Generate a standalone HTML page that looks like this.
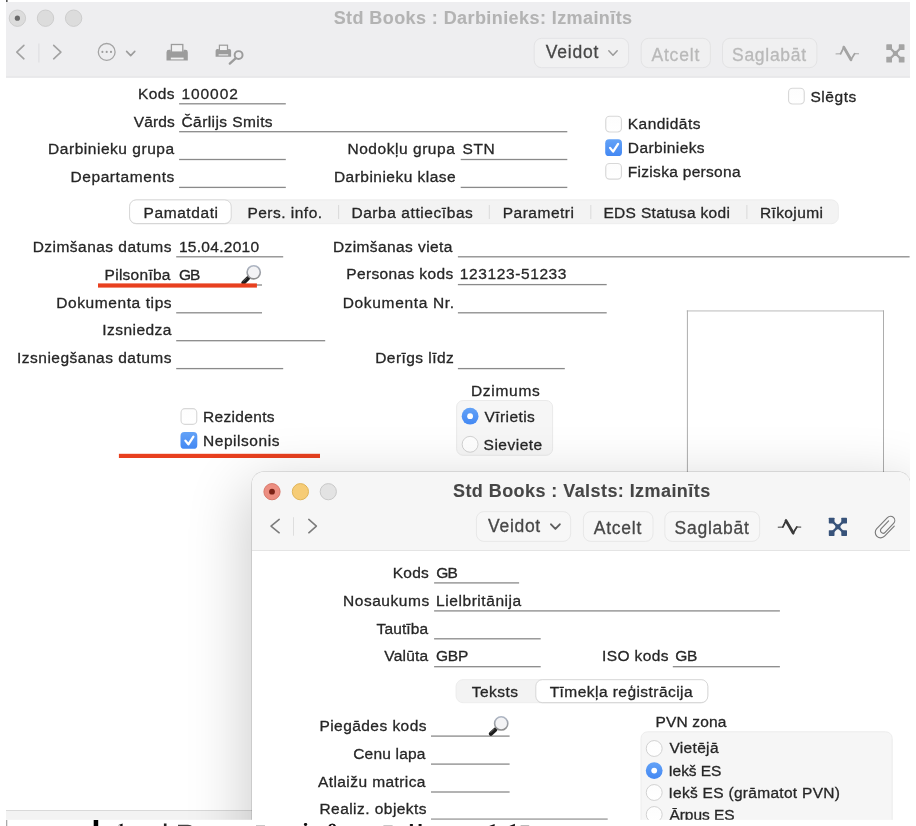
<!DOCTYPE html>
<html><head><meta charset="utf-8"><title>Std Books</title>
<style>
html,body{margin:0;padding:0}
body{width:916px;height:826px;position:relative;overflow:hidden;background:#fff;font-family:'Liberation Sans',sans-serif;}
.t{position:absolute;white-space:nowrap;line-height:20px;font-family:'Liberation Sans',sans-serif;will-change:transform;-webkit-text-stroke:0.3px currentColor;}
.abs{position:absolute}
svg{position:absolute;left:0;top:0}
</style></head><body>
<div class="abs" style="left:6px;top:2px;width:904px;height:818px;background:#fff"></div>
<svg width="916" height="826" viewBox="0 0 916 826"><rect x="6" y="2" width="904" height="73.9" fill="#eeeef0"/><rect x="6" y="75.8" width="904" height="2.1" fill="#e8e8ea"/></svg>
<div class="abs" style="left:6px;top:810px;width:904px;height:10px;background:#f3f3f3;border-top:1px solid #d9d9d9"></div>
<svg width="916" height="826" viewBox="0 0 916 826">
<defs>
<linearGradient id="blueg" x1="0" y1="0" x2="0" y2="1"><stop offset="0" stop-color="#63a2f7"/><stop offset="1" stop-color="#4388f3"/></linearGradient>
<linearGradient id="whiteg" x1="0" y1="0" x2="0" y2="1"><stop offset="0" stop-color="#fdfdfd"/><stop offset="1" stop-color="#ffffff"/></linearGradient>
<linearGradient id="lensg" x1="0" y1="0" x2="0" y2="1"><stop offset="0" stop-color="#aeb6c4"/><stop offset="1" stop-color="#8d8d8d"/></linearGradient>
</defs>
<circle cx="17.4" cy="18.2" r="8.2" fill="#dcdcdc" stroke="#cacaca" stroke-width="0.9"/>
<circle cx="45.5" cy="18.2" r="8.2" fill="#dcdcdc" stroke="#cacaca" stroke-width="0.9"/>
<circle cx="73.6" cy="18.2" r="8.2" fill="#dcdcdc" stroke="#cacaca" stroke-width="0.9"/>
<circle cx="17.4" cy="18.2" r="2.6" fill="#6a6a6a"/>
<polyline points="23.9,45.4 16.8,52.099999999999994 23.9,58.8" fill="none" stroke="#a2a2a2" stroke-width="1.6" stroke-linecap="round" stroke-linejoin="round"/>
<rect x="38.4" y="43.5" width="1" height="19" fill="#dddddf"/>
<polyline points="53.7,45.4 60.9,52.099999999999994 53.7,58.8" fill="none" stroke="#a2a2a2" stroke-width="1.6" stroke-linecap="round" stroke-linejoin="round"/>
<circle cx="106.7" cy="51.9" r="8.4" fill="none" stroke="#a4a4a4" stroke-width="1.3"/>
<circle cx="102.4" cy="51.9" r="1.05" fill="#9c9c9c"/>
<circle cx="106.7" cy="51.9" r="1.05" fill="#9c9c9c"/>
<circle cx="111.0" cy="51.9" r="1.05" fill="#9c9c9c"/>
<polyline points="126.6,51.4 130.7,55.6 134.8,51.4" fill="none" stroke="#9c9c9c" stroke-width="1.6" stroke-linecap="round" stroke-linejoin="round"/>
<rect x="171.4" y="44.5" width="11.4" height="8" fill="#f1f1f2" stroke="#9c9c9c" stroke-width="1.3"/>
<path d="M166.5 60.6 V52.2 Q166.5 49.8 169 49.8 H170.7 V51.6 H183.5 V49.8 H185.3 Q187.8 49.8 187.8 52.2 V60.6 Z" fill="#9c9c9c"/>
<rect x="170.8" y="57.6" width="12.8" height="1.8" fill="#f0f0f1"/>
<rect x="219.4" y="45.2" width="8.1" height="5.6" fill="#f1f1f2" stroke="#9c9c9c" stroke-width="1.2"/>
<path d="M215.6 56.7 V50.8 Q215.6 49 217.4 49 H218.8 V50.2 H228.1 V49 H229.3 Q231.1 49 231.1 50.8 V56.7 Z" fill="#9c9c9c"/>
<rect x="218.6" y="54.2" width="9.6" height="1.3" fill="#e4e4e5"/>
<circle cx="238.6" cy="55.1" r="3.95" fill="#eeeef0" stroke="#9c9c9c" stroke-width="1.95"/>
<line x1="235.6" y1="58.3" x2="229.8" y2="63.6" stroke="#9c9c9c" stroke-width="2.3" stroke-linecap="round"/>
<rect x="534.2" y="38.3" width="94.40" height="29.40" rx="7.5" fill="#f1f1f2" stroke="#e3e3e5" stroke-width="1"/>
<rect x="641.2" y="38.3" width="69.20" height="29.40" rx="7.5" fill="#f0f0f1" stroke="#e3e3e4" stroke-width="1"/>
<rect x="722.5" y="38.3" width="94.40" height="29.40" rx="7.5" fill="#f0f0f1" stroke="#e3e3e4" stroke-width="1"/>
<polyline points="608.8,50.8 613.0,55.2 617.2,50.8" fill="none" stroke="#9a9a9a" stroke-width="1.5" stroke-linecap="round" stroke-linejoin="round"/>
<polyline points="836.00,53.90 840.60,53.80 843.80,47.30 851.00,59.70 854.60,53.70 858.60,53.80" fill="none" stroke="#a4a4a4" stroke-width="1.0" stroke-linecap="round" stroke-linejoin="miter"/><polyline points="840.60,53.80 843.80,47.30 851.00,59.70 854.60,53.70" fill="none" stroke="#a4a4a4" stroke-width="1.7" stroke-linecap="round" stroke-linejoin="miter"/><polyline points="843.80,47.30 851.00,59.70" fill="none" stroke="#a4a4a4" stroke-width="2.8" stroke-linecap="round" stroke-linejoin="miter"/>
<rect x="886.30" y="44.30" width="5.7" height="5.7" rx="0.6" fill="#a4a4a4"/><rect x="898.80" y="44.30" width="5.7" height="5.7" rx="0.6" fill="#a4a4a4"/><rect x="886.30" y="56.80" width="5.7" height="5.7" rx="0.6" fill="#a4a4a4"/><rect x="898.80" y="56.80" width="5.7" height="5.7" rx="0.6" fill="#a4a4a4"/><rect x="892.90" y="50.90" width="5.0" height="5.0" fill="#a4a4a4"/><line x1="889.3" y1="47.3" x2="901.5" y2="59.5" stroke="#a4a4a4" stroke-width="2.3"/><line x1="901.5" y1="47.3" x2="889.3" y2="59.5" stroke="#a4a4a4" stroke-width="2.3"/>
<rect x="179.1" y="103.15" width="106.70" height="1.3" fill="#8a8a8a"/>
<rect x="179.1" y="131.05" width="388.20" height="1.3" fill="#8a8a8a"/>
<rect x="179.1" y="158.85" width="106.70" height="1.3" fill="#8a8a8a"/>
<rect x="179.1" y="186.75" width="106.70" height="1.3" fill="#8a8a8a"/>
<rect x="460.7" y="158.85" width="106.60" height="1.3" fill="#8a8a8a"/>
<rect x="460.7" y="186.75" width="106.60" height="1.3" fill="#8a8a8a"/>
<rect x="176.2" y="256.15" width="107.00" height="1.3" fill="#8a8a8a"/>
<rect x="176.2" y="284.35" width="85.80" height="1.3" fill="#8a8a8a"/>
<rect x="176.2" y="312.15" width="85.80" height="1.3" fill="#8a8a8a"/>
<rect x="176.2" y="340.05" width="149.00" height="1.3" fill="#8a8a8a"/>
<rect x="176.2" y="367.95" width="107.00" height="1.3" fill="#8a8a8a"/>
<rect x="457.9" y="256.15" width="451.70" height="1.3" fill="#8a8a8a"/>
<rect x="457.9" y="283.95" width="148.80" height="1.3" fill="#8a8a8a"/>
<rect x="457.9" y="312.15" width="148.80" height="1.3" fill="#8a8a8a"/>
<rect x="457.9" y="367.95" width="106.90" height="1.3" fill="#8a8a8a"/>
<rect x="788.55" y="88.25" width="15.700000000000001" height="15.700000000000001" rx="3.9" fill="url(#whiteg)" stroke="#d8d8d8" stroke-width="1.15"/>
<rect x="605.75" y="116.25" width="15.700000000000001" height="15.700000000000001" rx="3.9" fill="url(#whiteg)" stroke="#d8d8d8" stroke-width="1.15"/>
<rect x="605.2" y="139.3" width="16.8" height="16.8" rx="3.9" fill="url(#blueg)"/><polyline points="610.10,147.90 613.10,151.60 618.10,143.90" fill="none" stroke="#fff" stroke-width="2.3" stroke-linecap="round" stroke-linejoin="round"/>
<rect x="605.75" y="163.45000000000002" width="15.700000000000001" height="15.700000000000001" rx="3.9" fill="url(#whiteg)" stroke="#d8d8d8" stroke-width="1.15"/>
<rect x="181.05" y="408.65000000000003" width="15.700000000000001" height="15.700000000000001" rx="3.9" fill="url(#whiteg)" stroke="#d8d8d8" stroke-width="1.15"/>
<rect x="180.5" y="432.0" width="16.8" height="16.8" rx="3.9" fill="url(#blueg)"/><polyline points="185.40,440.60 188.40,444.30 193.40,436.60" fill="none" stroke="#fff" stroke-width="2.3" stroke-linecap="round" stroke-linejoin="round"/>
<rect x="129.5" y="199.8" width="708.9" height="23.9" rx="7" fill="#f3f3f3" stroke="#eaeaea" stroke-width="0.8"/>
<rect x="338.1" y="205" width="1" height="14" fill="#dadada"/>
<rect x="488.8" y="205" width="1" height="14" fill="#dadada"/>
<rect x="590.3" y="205" width="1" height="14" fill="#dadada"/>
<rect x="746.4" y="205" width="1" height="14" fill="#dadada"/>
<rect x="129.6" y="200.4" width="101.6" height="24" rx="6.5" fill="#000" opacity="0.06"/>
<rect x="129.6" y="199.9" width="101.6" height="23.6" rx="6.5" fill="#fff" stroke="#cfcfcf" stroke-width="0.8"/>
<line x1="248.00" y1="278.30" x2="243.40" y2="282.70" stroke="#1c1c1c" stroke-width="4.2" stroke-linecap="round"/><line x1="246.80" y1="277.90" x2="243.30" y2="281.40" stroke="#6a6a6a" stroke-width="0.9" stroke-linecap="round"/><circle cx="253.7" cy="272.3" r="6.6" fill="#f3f3f5" stroke="url(#lensg)" stroke-width="1.6"/>
<rect x="456.6" y="400.5" width="96" height="54.8" rx="6.5" fill="#f6f6f6" stroke="#e8e8e8" stroke-width="0.9"/>
<circle cx="470.1" cy="416.2" r="8.4" fill="url(#blueg)"/><circle cx="470.1" cy="416.2" r="2.9" fill="#fff"/>
<circle cx="470.1" cy="444.3" r="7.95" fill="url(#whiteg)" stroke="#cdcdcd" stroke-width="0.9"/>
<rect x="686.8" y="310.1" width="197.2" height="1.6" fill="#d4d4d4"/><rect x="686.9" y="310.4" width="1" height="200" fill="#adadad"/><rect x="883.0" y="310.4" width="1" height="200" fill="#adadad"/>
<rect x="98" y="283.4" width="158.9" height="4.2" fill="#e8401f"/>
<rect x="118.9" y="453.8" width="201.1" height="4.2" fill="#e8401f"/>
</svg>
<div class="t" id="a0" style="left:333px;top:8px;font-size:18px;letter-spacing:0.416px;color:#b3b3b3;font-weight:bold;-webkit-text-stroke:0.1px currentColor;transform:translateX(0.7px)">Std Books : Darbinieks: Izmainīts</div>
<div class="t" id="a1" style="left:545px;top:42px;font-size:17.5px;letter-spacing:0.76px;color:#474747;transform:translateX(0.8px)">Veidot</div>
<div class="t" id="a2" style="left:651px;top:45px;font-size:17.5px;letter-spacing:0.82px;color:#b9b9b9;transform:translateX(0.4px)">Atcelt</div>
<div class="t" id="a3" style="left:732px;top:45px;font-size:17.5px;letter-spacing:0.714px;color:#b9b9b9;transform:translateX(0.0px)">Saglabāt</div>
<div class="t" id="a4" style="left:137px;top:84px;font-size:15.5px;letter-spacing:0.433px;color:#262626;transform:translateX(0.9px)">Kods</div>
<div class="t" id="a5" style="left:181px;top:84px;font-size:15.5px;letter-spacing:0.92px;color:#262626;transform:translateX(0.5px)">100002</div>
<div class="t" id="a6" style="left:133px;top:112px;font-size:15.5px;letter-spacing:0.125px;color:#262626;transform:translateX(0.7px)">Vārds</div>
<div class="t" id="a7" style="left:181px;top:112px;font-size:15.5px;letter-spacing:0.417px;color:#262626;transform:translateX(0.5px)">Čārlijs Smits</div>
<div class="t" id="a8" style="left:48px;top:139px;font-size:15.5px;letter-spacing:0.527px;color:#262626;transform:translateX(0.1px)">Darbinieku grupa</div>
<div class="t" id="a9" style="left:70px;top:167px;font-size:15.5px;letter-spacing:0.6px;color:#262626;transform:translateX(0.4px)">Departaments</div>
<div class="t" id="a10" style="left:347px;top:139px;font-size:15.5px;letter-spacing:0.55px;color:#262626;transform:translateX(0.4px)">Nodokļu grupa</div>
<div class="t" id="a11" style="left:462px;top:139px;font-size:15.5px;letter-spacing:0.55px;color:#262626;transform:translateX(0.5px)">STN</div>
<div class="t" id="a12" style="left:333px;top:167px;font-size:15.5px;letter-spacing:0.473px;color:#262626;transform:translateX(0.9px)">Darbinieku klase</div>
<div class="t" id="a13" style="left:810px;top:87px;font-size:15.5px;letter-spacing:0.56px;color:#262626;transform:translateX(0.4px)">Slēgts</div>
<div class="t" id="a14" style="left:627px;top:114px;font-size:15.5px;letter-spacing:0.463px;color:#262626;transform:translateX(0.8px)">Kandidāts</div>
<div class="t" id="a15" style="left:627px;top:138px;font-size:15.5px;letter-spacing:0.389px;color:#262626;transform:translateX(0.8px)">Darbinieks</div>
<div class="t" id="a16" style="left:627px;top:162px;font-size:15.5px;letter-spacing:0.3px;color:#262626;transform:translateX(0.8px)">Fiziska persona</div>
<div class="t" id="a17" style="left:143px;top:203px;font-size:15.5px;letter-spacing:0.587px;color:#262626;transform:translateX(0.5px)">Pamatdati</div>
<div class="t" id="a18" style="left:247px;top:203px;font-size:15.5px;letter-spacing:0.49px;color:#262626;transform:translateX(0.4px)">Pers. info.</div>
<div class="t" id="a19" style="left:351px;top:203px;font-size:15.5px;letter-spacing:0.573px;color:#262626;transform:translateX(0.4px)">Darba attiecības</div>
<div class="t" id="a20" style="left:502px;top:203px;font-size:15.5px;letter-spacing:0.512px;color:#262626;transform:translateX(0.7px)">Parametri</div>
<div class="t" id="a21" style="left:603px;top:203px;font-size:15.5px;letter-spacing:0.34px;color:#262626;transform:translateX(0.4px)">EDS Statusa kodi</div>
<div class="t" id="a22" style="left:760px;top:203px;font-size:15.5px;letter-spacing:0.371px;color:#262626;transform:translateX(0.0px)">Rīkojumi</div>
<div class="t" id="a23" style="left:32px;top:237px;font-size:15.5px;letter-spacing:0.467px;color:#262626;transform:translateX(0.7px)">Dzimšanas datums</div>
<div class="t" id="a24" style="left:178px;top:237px;font-size:15.5px;letter-spacing:0.289px;color:#262626;transform:translateX(0.9px)">15.04.2010</div>
<div class="t" id="a25" style="left:104px;top:265px;font-size:15.5px;letter-spacing:0.262px;color:#262626;transform:translateX(0.6px)">Pilsonība</div>
<div class="t" id="a26" style="left:178px;top:265px;font-size:15.5px;letter-spacing:-0.9px;color:#262626;transform:translateX(0.9px)">GB</div>
<div class="t" id="a27" style="left:56px;top:293px;font-size:15.5px;letter-spacing:0.585px;color:#262626;transform:translateX(0.3px)">Dokumenta tips</div>
<div class="t" id="a28" style="left:102px;top:320px;font-size:15.5px;letter-spacing:0.463px;color:#262626;transform:translateX(0.2px)">Izsniedza</div>
<div class="t" id="a29" style="left:17px;top:348px;font-size:15.5px;letter-spacing:0.494px;color:#262626;transform:translateX(0.0px)">Izsniegšanas datums</div>
<div class="t" id="a30" style="left:332px;top:237px;font-size:15.5px;letter-spacing:0.414px;color:#262626;transform:translateX(0.9px)">Dzimšanas vieta</div>
<div class="t" id="a31" style="left:346px;top:264px;font-size:15.5px;letter-spacing:0.375px;color:#262626;transform:translateX(0.2px)">Personas kods</div>
<div class="t" id="a32" style="left:459px;top:264px;font-size:15.5px;letter-spacing:0.618px;color:#262626;transform:translateX(0.7px)">123123-51233</div>
<div class="t" id="a33" style="left:342px;top:293px;font-size:15.5px;letter-spacing:0.667px;color:#262626;transform:translateX(0.7px)">Dokumenta Nr.</div>
<div class="t" id="a34" style="left:375px;top:348px;font-size:15.5px;letter-spacing:0.45px;color:#262626;transform:translateX(0.2px)">Derīgs līdz</div>
<div class="t" id="a35" style="left:470px;top:381px;font-size:15.5px;letter-spacing:0.717px;color:#262626;transform:translateX(0.9px)">Dzimums</div>
<div class="t" id="a36" style="left:484px;top:407px;font-size:15.5px;letter-spacing:0.4px;color:#262626;transform:translateX(0.6px)">Vīrietis</div>
<div class="t" id="a37" style="left:483px;top:435px;font-size:15.5px;letter-spacing:0.486px;color:#262626;transform:translateX(0.6px)">Sieviete</div>
<div class="t" id="a38" style="left:203px;top:407px;font-size:15.5px;letter-spacing:0.337px;color:#262626;transform:translateX(0.0px)">Rezidents</div>
<div class="t" id="a39" style="left:203px;top:431px;font-size:15.5px;letter-spacing:0.544px;color:#262626;transform:translateX(0.0px)">Nepilsonis</div>
<div class="abs" style="left:252px;top:471.5px;width:658px;height:400px;border-radius:12px;background:#fff;box-shadow:0 0 0 0.7px rgba(0,0,0,0.13),0 19px 60px 6px rgba(0,0,0,0.20),0 0 3px rgba(0,0,0,0.05);overflow:hidden">
<div class="abs" style="left:0;top:0;width:100%;height:78.5px;background:#f6f6f6;border-bottom:1px solid #e4e4e4"></div>
</div>
<svg width="916" height="826" viewBox="0 0 916 826">
<circle cx="272" cy="491.7" r="8.1" fill="#ec8e81" stroke="#d9796b" stroke-width="1"/><circle cx="272" cy="491.7" r="2.9" fill="#7b2216"/>
<circle cx="300.4" cy="491.7" r="8.1" fill="#f6cc76" stroke="#e0b55a" stroke-width="1"/>
<circle cx="328.3" cy="491.7" r="8.1" fill="#e3e3e3" stroke="#c9c9c9" stroke-width="1"/>
<polyline points="279.2,519.4 271.0,526.0999999999999 279.2,532.8" fill="none" stroke="#7b7b7b" stroke-width="1.55" stroke-linecap="round" stroke-linejoin="round"/>
<rect x="293" y="517.2" width="1" height="18.5" fill="#dedede"/>
<polyline points="308.8,519.4 316.4,526.0999999999999 308.8,532.8" fill="none" stroke="#7b7b7b" stroke-width="1.55" stroke-linecap="round" stroke-linejoin="round"/>
<rect x="476.4" y="511.6" width="94.20" height="29.80" rx="7.5" fill="#f7f7f7" stroke="#e8e8e8" stroke-width="1"/>
<rect x="583.4" y="511.6" width="69.60" height="29.80" rx="7.5" fill="#f7f7f7" stroke="#e8e8e8" stroke-width="1"/>
<rect x="664.8" y="511.6" width="94.80" height="29.80" rx="7.5" fill="#f7f7f7" stroke="#e8e8e8" stroke-width="1"/>
<polyline points="551.0,524.3 555.4,528.9 559.8,524.3" fill="none" stroke="#5e5e5e" stroke-width="1.9" stroke-linecap="round" stroke-linejoin="round"/>
<polyline points="778.20,527.20 782.80,527.10 786.00,520.60 793.20,533.00 796.80,527.00 800.80,527.10" fill="none" stroke="#3a3a3a" stroke-width="1.0" stroke-linecap="round" stroke-linejoin="miter"/><polyline points="782.80,527.10 786.00,520.60 793.20,533.00 796.80,527.00" fill="none" stroke="#3a3a3a" stroke-width="1.7" stroke-linecap="round" stroke-linejoin="miter"/><polyline points="786.00,520.60 793.20,533.00" fill="none" stroke="#3a3a3a" stroke-width="2.8" stroke-linecap="round" stroke-linejoin="miter"/>
<rect x="828.80" y="517.70" width="5.7" height="5.7" rx="0.6" fill="#38537a"/><rect x="841.30" y="517.70" width="5.7" height="5.7" rx="0.6" fill="#38537a"/><rect x="828.80" y="530.20" width="5.7" height="5.7" rx="0.6" fill="#38537a"/><rect x="841.30" y="530.20" width="5.7" height="5.7" rx="0.6" fill="#38537a"/><rect x="835.40" y="524.30" width="5.0" height="5.0" fill="#38537a"/><line x1="831.8" y1="520.7" x2="844.0" y2="532.9000000000001" stroke="#38537a" stroke-width="2.3"/><line x1="844.0" y1="520.7" x2="831.8" y2="532.9000000000001" stroke="#38537a" stroke-width="2.3"/>
<g transform="translate(880.64,532.41) rotate(43.8)"><path d="M5.45 -14.0 L5.45 0 A5.4 5.4 0 0 1 -5.36 0 L-5.36 -15.4 A4.25 4.25 0 0 1 3.14 -15.4 L3.14 -3.2 A2.7 2.7 0 0 1 -2.27 -3.2 L-2.27 -13.9" fill="none" stroke="#7a7a7a" stroke-width="1.15" stroke-linecap="round" stroke-linejoin="round"/></g>
<rect x="434.1" y="582.25" width="85.00" height="1.3" fill="#8a8a8a"/>
<rect x="434.1" y="610.25" width="345.80" height="1.3" fill="#8a8a8a"/>
<rect x="434.1" y="638.15" width="106.60" height="1.3" fill="#8a8a8a"/>
<rect x="434.1" y="666.05" width="106.60" height="1.3" fill="#8a8a8a"/>
<rect x="672.8" y="666.05" width="107.10" height="1.3" fill="#8a8a8a"/>
<rect x="431.0" y="735.45" width="78.60" height="1.3" fill="#8a8a8a"/>
<rect x="431.0" y="763.45" width="78.60" height="1.3" fill="#8a8a8a"/>
<rect x="431.0" y="791.35" width="78.60" height="1.3" fill="#8a8a8a"/>
<rect x="431.0" y="818.50" width="176.70" height="1.3" fill="#8a8a8a"/>
<rect x="456.0" y="679.6" width="251.8" height="23.1" rx="7" fill="#f3f3f3" stroke="#eaeaea" stroke-width="0.8"/>
<rect x="535.8" y="680.2" width="172" height="23.2" rx="6.5" fill="#000" opacity="0.06"/>
<rect x="535.8" y="679.7" width="172" height="22.9" rx="6.5" fill="#fff" stroke="#cfcfcf" stroke-width="0.8"/>
<line x1="495.50" y1="729.40" x2="490.90" y2="733.80" stroke="#1c1c1c" stroke-width="4.2" stroke-linecap="round"/><line x1="494.30" y1="729.00" x2="490.80" y2="732.50" stroke="#6a6a6a" stroke-width="0.9" stroke-linecap="round"/><circle cx="501.2" cy="723.4" r="6.6" fill="#f3f3f5" stroke="url(#lensg)" stroke-width="1.6"/>
<rect x="641" y="731.8" width="251.2" height="120" rx="6.5" fill="#f6f6f6" stroke="#ebebeb" stroke-width="0.9"/>
<circle cx="654.2" cy="748.5" r="7.95" fill="url(#whiteg)" stroke="#cdcdcd" stroke-width="0.9"/>
<circle cx="654.2" cy="770.6" r="8.4" fill="url(#blueg)"/><circle cx="654.2" cy="770.6" r="2.9" fill="#fff"/>
<circle cx="654.2" cy="792.5" r="7.95" fill="url(#whiteg)" stroke="#cdcdcd" stroke-width="0.9"/>
<circle cx="654.2" cy="814.5" r="7.95" fill="url(#whiteg)" stroke="#cdcdcd" stroke-width="0.9"/>
</svg>
<div class="t" id="b0" style="left:453px;top:481px;font-size:18px;letter-spacing:0.432px;color:#464646;font-weight:bold;-webkit-text-stroke:0.1px currentColor;transform:translateX(0.0px)">Std Books : Valsts: Izmainīts</div>
<div class="t" id="b1" style="left:488px;top:516px;font-size:17.5px;letter-spacing:0.68px;color:#474747;transform:translateX(0.1px)">Veidot</div>
<div class="t" id="b2" style="left:593px;top:518px;font-size:17.5px;letter-spacing:0.74px;color:#474747;transform:translateX(0.8px)">Atcelt</div>
<div class="t" id="b3" style="left:674px;top:518px;font-size:17.5px;letter-spacing:0.729px;color:#474747;transform:translateX(0.6px)">Saglabāt</div>
<div class="t" id="b4" style="left:392px;top:563px;font-size:15.5px;letter-spacing:0.267px;color:#262626;transform:translateX(0.7px)">Kods</div>
<div class="t" id="b5" style="left:436px;top:563px;font-size:15.5px;letter-spacing:-0.8px;color:#262626;transform:translateX(0.3px)">GB</div>
<div class="t" id="b6" style="left:343px;top:591px;font-size:15.5px;letter-spacing:0.538px;color:#262626;transform:translateX(0.0px)">Nosaukums</div>
<div class="t" id="b7" style="left:436px;top:591px;font-size:15.5px;letter-spacing:0.558px;color:#262626;transform:translateX(0.1px)">Lielbritānija</div>
<div class="t" id="b8" style="left:376px;top:619px;font-size:15.5px;letter-spacing:0.117px;color:#262626;transform:translateX(0.6px)">Tautība</div>
<div class="t" id="b9" style="left:384px;top:646px;font-size:15.5px;letter-spacing:0.2px;color:#262626;transform:translateX(0.3px)">Valūta</div>
<div class="t" id="b10" style="left:436px;top:646px;font-size:15.5px;letter-spacing:-0.3px;color:#262626;transform:translateX(0.1px)">GBP</div>
<div class="t" id="b11" style="left:602px;top:646px;font-size:15.5px;letter-spacing:0.386px;color:#262626;transform:translateX(0.0px)">ISO kods</div>
<div class="t" id="b12" style="left:675px;top:646px;font-size:15.5px;letter-spacing:-0.2px;color:#262626;transform:translateX(0.2px)">GB</div>
<div class="t" id="b13" style="left:471px;top:682px;font-size:15.5px;letter-spacing:0.44px;color:#262626;transform:translateX(0.8px)">Teksts</div>
<div class="t" id="b14" style="left:549px;top:682px;font-size:15.5px;letter-spacing:0.447px;color:#262626;transform:translateX(0.7px)">Tīmekļa reģistrācija</div>
<div class="t" id="b15" style="left:319px;top:716px;font-size:15.5px;letter-spacing:0.45px;color:#262626;transform:translateX(0.4px)">Piegādes kods</div>
<div class="t" id="b16" style="left:353px;top:744px;font-size:15.5px;letter-spacing:0.2px;color:#262626;transform:translateX(0.2px)">Cenu lapa</div>
<div class="t" id="b17" style="left:318px;top:772px;font-size:15.5px;letter-spacing:0.414px;color:#262626;transform:translateX(0.0px)">Atlaižu matrica</div>
<div class="t" id="b18" style="left:319px;top:799px;font-size:15.5px;letter-spacing:0.457px;color:#262626;transform:translateX(0.4px)">Realiz. objekts</div>
<div class="t" id="b19" style="left:655px;top:712px;font-size:15.5px;letter-spacing:0.186px;color:#262626;transform:translateX(0.4px)">PVN zona</div>
<div class="t" id="b20" style="left:669px;top:738px;font-size:15.5px;letter-spacing:0.333px;color:#262626;transform:translateX(0.4px)">Vietējā</div>
<div class="t" id="b21" style="left:668px;top:761px;font-size:15.5px;letter-spacing:-0.083px;color:#262626;transform:translateX(0.4px)">Iekš ES</div>
<div class="t" id="b22" style="left:668px;top:783px;font-size:15.5px;letter-spacing:0.295px;color:#262626;transform:translateX(0.4px)">Iekš ES (grāmatot PVN)</div>
<div class="t" id="b23" style="left:669px;top:805px;font-size:15.5px;letter-spacing:-0.029px;color:#262626;transform:translateX(0.4px)">Ārpus ES</div>
<svg width="916" height="826" viewBox="0 0 916 826"><rect x="0" y="819.8" width="916" height="7" fill="#fff"/></svg>
<div class="abs" style="left:910px;top:0;width:6px;height:826px;background:#fff"></div>
<div class="abs" style="left:0;top:0;width:6px;height:826px;background:#fff"></div>
<div class="abs" style="left:0;top:0;width:916px;height:2px;background:#fff"></div>
<svg width="916" height="826" viewBox="0 0 916 826">
<rect x="6" y="0" width="1.6" height="2" fill="#555"/>
<rect x="6" y="820" width="1.3" height="6" fill="#aaa"/>
<rect x="93.7" y="820" width="4.5" height="6" fill="#000"/>
<path d="M117.8 825.2 L122.6 823.4 V826 H120.2 V825.2 Z" fill="#111"/>
<rect x="163.9" y="823.5" width="2.6" height="2.5" fill="#222"/>
<path d="M178 826 V824.8 H188 Q191.4 825 191.8 826 Z" fill="#444"/>
<rect x="256" y="825.2" width="9" height="0.8" fill="#bbb"/>
<rect x="303.9" y="822.9" width="3.3" height="3.1" rx="1.4" fill="#111"/>
<path d="M328.4 826 Q329.2 823.6 332.4 823.5 Q335.4 823.6 336 826 H333.6 Q333 824.8 332.2 824.8 Q331.2 824.8 331 826 Z" fill="#111"/>
<rect x="383.4" y="825.2" width="9.2" height="0.8" fill="#bbb"/>
<rect x="409.7" y="824" width="3.4" height="2" rx="1" fill="#111"/><rect x="418.4" y="824" width="3.4" height="2" rx="1" fill="#111"/>
<path d="M489.2 826 L494.6 824 V826 Z" fill="#111"/>
<path d="M509.4 826 L514.9 823.8 V826 Z" fill="#111"/>
<rect x="520.6" y="825.2" width="8.6" height="0.8" fill="#aaa"/>
</svg>
</body></html>
